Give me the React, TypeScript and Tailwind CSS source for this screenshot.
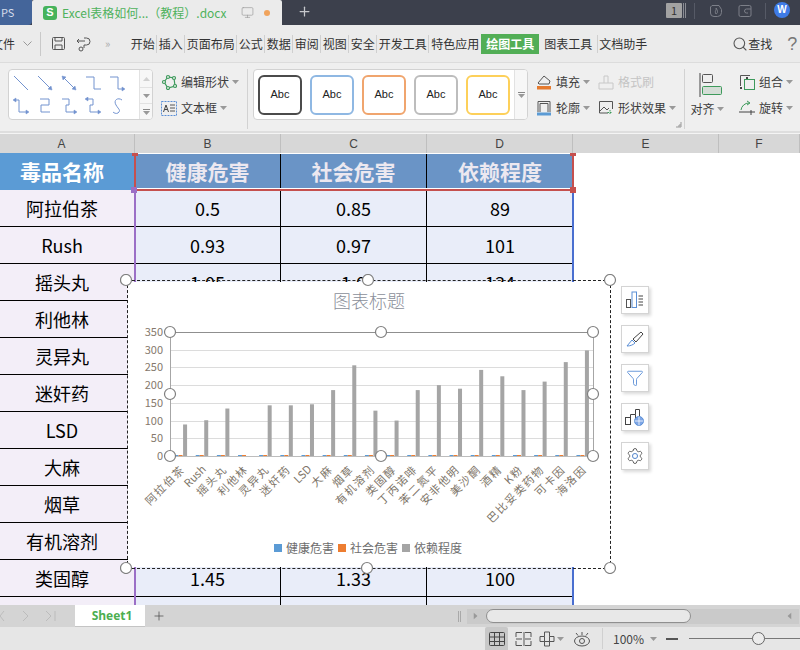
import React from 'react';
import { Monitor, Plus, Search, Settings, Funnel } from 'lucide-react';

const menuItems = [
  { label: '开始', w: 'w-[28px]' },
  { label: '插入', w: 'w-[28px]' },
  { label: '页面布局', w: 'w-[52px]' },
  { label: '公式', w: 'w-[28px]' },
  { label: '数据', w: 'w-[28px]' },
  { label: '审阅', w: 'w-[28px]' },
  { label: '视图', w: 'w-[28px]' },
  { label: '安全', w: 'w-[28px]' },
  { label: '开发工具', w: 'w-[52px]' },
  { label: '特色应用', w: 'w-[52px]' },
];

const rows = [
  ['阿拉伯茶', '0.5', '0.85', '89'],
  ['Rush', '0.93', '0.97', '101'],
  ['摇头丸', '1.05', '1.0', '134'],
  ['利他林', '', '', ''],
  ['灵异丸', '', '', '143'],
  ['迷奸药', '', '', '143'],
  ['LSD', '', '', '146'],
  ['大麻', '', '', '186'],
  ['烟草', '', '', '256'],
  ['有机溶剂', '', '', '128'],
  ['类固醇', '1.45', '1.33', '100'],
  ['', '', '', ''],
];

const categories = [
  ['阿拉伯茶', 89], ['Rush', 101], ['摇头丸', 134], ['利他林', 0], ['灵异丸', 143],
  ['迷奸药', 143], ['LSD', 146], ['大麻', 186], ['烟草', 256], ['有机溶剂', 128],
  ['类固醇', 100], ['丁丙诺啡', 186], ['苯二氮平', 200], ['安非他明', 190], ['美沙酮', 243],
  ['酒精', 225], ['K粉', 186], ['巴比妥类药物', 210], ['可卡因', 265], ['海洛因', 298],
] as [string, number][];

const Caret = ({ className = '' }: { className?: string }) => (
  <svg width="7" height="4" viewBox="0 0 7 4" className={className}>
    <path d="M0 0h7L3.5 4z" fill="#999" />
  </svg>
);

const LineIcon = ({ d, arrow }: { d: string; arrow?: string }) => (
  <svg width="18" height="18" viewBox="0 0 18 18" fill="none" stroke="#7393cf" strokeWidth="1">
    <path d={d} />
    {arrow && <path d={arrow} fill="#7393cf" strokeWidth="0.5" />}
  </svg>
);

const lineIcons = [
  { d: 'M2 2l14 14' },
  { d: 'M2 2l13 13', arrow: 'M16 16l-4-1 3-3z' },
  { d: 'M3 3l12 12', arrow: 'M2 2l4 1-3 3zM16 16l-4-1 3-3z' },
  { d: 'M2 3h8v12h7' },
  { d: 'M2 3h8v12h6', arrow: 'M17 15l-3-2v4z' },
  { d: 'M4 3h3v12h8', arrow: 'M1 3l3-2v4zM17 15l-3-2v4z' },
  { d: 'M4 2h9v6H5v7h9' },
  { d: 'M2 2h7v6H6v7h8', arrow: 'M17 15l-3-2v4z' },
  { d: 'M4 2h5v6H6v7h8', arrow: 'M1 2l3-2v4zM17 15l-3-2v4z' },
  { d: 'M14 3c-4-3-9 0-6 5s5 5 2 8c-2 1-4 0-5-1' },
];

const abcBoxes = [
  'border-[#4b4b4b]',
  'border-[#8fb8e3]',
  'border-[#f0a56e]',
  'border-[#bdbdbd]',
  'border-[#fdd05a]',
];

const RibbonBtn = ({ icon, label, muted, caret = true }: { icon: React.ReactNode; label: string; muted?: boolean; caret?: boolean }) => (
  <div className="flex h-[26px] items-center whitespace-nowrap">
    <span className="flex w-[20px] shrink-0 items-center">{icon}</span>
    <span className={`text-[12px] leading-none ${muted ? 'text-[#c4c4c4]' : 'text-[#3c3c3c]'}`}>{label}</span>
    {caret && <Caret className="ml-[3px] shrink-0" />}
  </div>
);

const Divider = ({ className = '' }: { className?: string }) => <div className={`w-px bg-[#d2d2d2] ${className}`} />;

const Handle = ({ x, y }: { x: number; y: number }) => (
  <circle cx={x} cy={y} r="5.5" fill="#fff" stroke="#7f7f7f" strokeWidth="1.2" />
);

function ChartGraphic() {
  const baseY = 456;
  const slot = 423 / 20;
  return (
    <svg viewBox="120 274 500 300" className="absolute left-[-8px] top-[-7px] h-[300px] w-[500px]" fontFamily="'Noto Sans CJK SC', sans-serif">
      <text x="369" y="308" textAnchor="middle" fontSize="18" fontWeight="300" fill="#8a8f9a">图表标题</text>
      {[300, 250, 200, 150, 100, 50].map((v) => {
        const y = Math.round(baseY - (v * 124) / 350) + 0.5;
        return <line key={v} x1="170" x2="593" y1={y} y2={y} stroke="#dcdcdc" strokeWidth="1" />;
      })}
      {[350, 300, 250, 200, 150, 100, 50, 0].map((v) => (
        <text key={v} x="163" y={baseY - (v * 124) / 350 + 4} textAnchor="end" fontSize="11" fill="#85786c">{v}</text>
      ))}
      <path d="M170.500 332V456M593.500 332V456" stroke="#a6a6a6" strokeWidth="1" fill="none" />
      <line x1="170" x2="593" y1="332.500" y2="332.500" stroke="#8f8f8f" strokeWidth="1" />
      <line x1="170" x2="593" y1="456.500" y2="456.500" stroke="#bdbdbd" strokeWidth="1" />
      {categories.map(([name, value], i) => {
        const cx = 170 + slot * (i + 0.5);
        const h = (value * 124) / 350;
        const ax = cx + 5;
        return (
          <g key={name}>
            <rect x={cx - 6} y={baseY - 1} width="4" height="1" fill="#5b9bd5" />
            <rect x={cx - 2} y={baseY - 1} width="4" height="1" fill="#ed7d31" />
            <rect x={cx + 2.5} y={baseY - h} width="4" height={h} fill="#a5a5a5" />
            <text
              x={ax}
              y={470}
              textAnchor="end"
              fontSize="11"
              letterSpacing={/^[A-Za-z]+$/.test(name) ? 0 : 1.6}
              fill="#7d7468"
              transform={`rotate(-45 ${ax} 470)`}
            >
              {name}
            </text>
          </g>
        );
      })}
      <rect x="274" y="544" width="8" height="8" fill="#5b9bd5" />
      <text x="286" y="552.500" fontSize="12" fill="#6e6e6e">健康危害</text>
      <rect x="338" y="544" width="8" height="8" fill="#ed7d31" />
      <text x="350" y="552.500" fontSize="12" fill="#6e6e6e">社会危害</text>
      <rect x="402" y="544" width="8" height="8" fill="#a5a5a5" />
      <text x="414" y="552.500" fontSize="12" fill="#6e6e6e">依赖程度</text>
      {[[170, 332], [381, 332], [593, 332], [170, 394], [593, 394], [170, 456], [381, 456], [593, 456]].map(([x, y]) => (
        <Handle key={`${x}-${y}`} x={x} y={y} />
      ))}
      {[[126, 280], [368, 280], [610, 280], [126, 568], [367, 568], [610, 568]].map(([x, y]) => (
        <Handle key={`o${x}-${y}`} x={x} y={y} />
      ))}
    </svg>
  );
}

const SideBtn = ({ children }: { children: React.ReactNode }) => (
  <div className="flex h-[28px] w-[28px] items-center justify-center border border-[#d4d4d4] bg-white shadow-[2px_2px_3px_rgba(0,0,0,0.15)]">
    {children}
  </div>
);

export default function App() {
  return (
    <div className="flex h-[650px] w-[800px] flex-col overflow-hidden bg-white font-['Noto_Sans_CJK_SC',sans-serif] text-black">
      {/* title bar */}
      <div className="flex h-[25px] shrink-0 items-stretch bg-[#3c404c]">
        <div className="flex w-[32px] shrink-0 items-center rounded-br-[4px] bg-[#44659a] pl-[1px] text-[11px] text-[#d5dcea]">PS</div>
        <div className="flex w-[250px] shrink-0 items-center rounded-t-[2px] bg-[#ebebeb] pl-[11px]">
          <div className="flex h-[14px] w-[14px] shrink-0 items-center justify-center rounded-[3px] bg-[#46b35b]">
            <span className="font-['Liberation_Sans',sans-serif] text-[11px] font-bold leading-none text-white">S</span>
          </div>
          <span className="ml-[5px] w-[168px] shrink-0 whitespace-nowrap text-[12px] leading-none text-[#4fb25c]">Excel表格如何...（教程）.docx</span>
          <Monitor className="ml-[11px] h-[13px] w-[13px] shrink-0 text-[#999]" strokeWidth={1.2} />
          <span className="ml-[10px] h-[6px] w-[6px] shrink-0 rounded-full bg-[#f0a35c]" />
        </div>
        <Plus className="ml-[15px] mt-[4px] h-[15px] w-[15px] shrink-0 text-[#c6c8cc]" strokeWidth={2} />
        <div className="ml-[354px] mt-[3px] flex h-[15px] w-[16px] shrink-0 items-center justify-center rounded-[1px] bg-[#a2a2a2] text-[11px] leading-none text-[#333]">1</div>
        <div className="ml-[1px] mt-[3px] h-[15px] w-[3px] shrink-0 border-x border-[#8b8d94]" />
        <div className="ml-[8px] mt-[3px] h-[16px] w-px shrink-0 bg-[#565a66]" />
        <svg width="14" height="14" viewBox="0 0 14 14" fill="none" stroke="#7c7f88" className="ml-[14px] mt-[4px] shrink-0">
          <path d="M3 1.500h7l2.500 4v3a4 4 0 0 1-4 4H5a3.500 3.500 0 0 1-3.500-3.500V3z" />
          <path d="M7 4c1 2-2 3 0 6 2-1 2-3 0-6z" />
        </svg>
        <svg width="14" height="14" viewBox="0 0 14 14" fill="none" stroke="#7c7f88" className="ml-[15px] mt-[4px] shrink-0">
          <rect x="1" y="1.500" width="12" height="11" rx="1.500" />
          <path d="M13 5H8.500a2 2 0 0 0 0 4H10" />
        </svg>
        <div className="ml-[13px] mt-[3px] h-[16px] w-px shrink-0 bg-[#565a66]" />
        <div className="ml-[8px] mt-[2px] flex h-[16px] w-[16px] shrink-0 items-center justify-center rounded-full bg-[#3f7be6] font-['Liberation_Sans',sans-serif] text-[10px] font-bold leading-none text-white">W</div>
      </div>

      {/* menu bar */}
      <div className="flex h-[38px] shrink-0 items-center border-b border-[#dcdcdc] bg-[#ebebeb]">
        <span className="ml-[-9px] w-[25px] whitespace-nowrap text-[12px] leading-none text-[#333]">文件</span>
        <svg width="9" height="6" viewBox="0 0 9 6" fill="none" stroke="#999" className="ml-[7px]"><path d="M.5.500l4 4 4-4" /></svg>
        <div className="ml-[8px] h-[24px] w-px bg-[#c9c9c9]" />
        <svg width="15" height="15" viewBox="0 0 15 15" fill="none" stroke="#555" className="ml-[10px]">
          <path d="M1.500 2.500a1 1 0 0 1 1-1h10a1 1 0 0 1 1 1v10a1 1 0 0 1-1 1h-10a1 1 0 0 1-1-1z" />
          <path d="M4 1.500V5h7V1.500M4 13.500V9h7v4.500" />
        </svg>
        <svg width="16" height="16" viewBox="0 0 16 16" fill="none" stroke="#555" className="ml-[10px]">
          <path d="M1 5h8M3 3L1 5l2 2M8 2h2.500a3.500 3.500 0 0 1 0 7H8v3" />
          <circle cx="5" cy="13" r="2" />
        </svg>
        <span className="ml-[13px] text-[11px] leading-none tracking-[-1px] text-[#aaa]">»</span>
        <div className="ml-[20px] flex items-center">
          {menuItems.map((m, i) => (
            <div key={m.label} className={`flex h-[18px] items-center justify-center whitespace-nowrap text-[12px] leading-none text-[#333] ${m.w} ${i < menuItems.length - 1 ? 'border-r border-[#cfcfcf]' : ''}`}>
              {m.label}
            </div>
          ))}
        </div>
        <div className="flex h-[20px] w-[58px] items-center justify-center bg-[#52ae56] text-[12px] font-bold leading-none text-white">绘图工具</div>
        <div className="flex h-[18px] w-[59px] items-center justify-center border-r border-[#cfcfcf] text-[12px] leading-none text-[#333]">图表工具</div>
        <div className="ml-[1px] whitespace-nowrap text-[12px] leading-none text-[#333]">文档助手</div>
        <Search className="ml-[85px] h-[16px] w-[16px] text-[#555]" strokeWidth={1.6} />
        <span className="whitespace-nowrap text-[12px] leading-none text-[#333]">查找</span>
        <span className="ml-[15px] font-['Liberation_Sans',sans-serif] text-[18px] font-light leading-none text-[#777]">?</span>
      </div>

      {/* ribbon */}
      <div className="flex h-[70px] shrink-0 items-start border-b-[2px] border-[#dedede] bg-[#efefef] pt-[6px]">
        <div className="ml-[8px] flex h-[51px] w-[145px] shrink-0 overflow-hidden rounded-[4px] border border-[#d2d2d2] bg-white">
          <div className="grid w-[120px] grid-cols-5 content-center gap-y-[5px]">
            {lineIcons.map((icon, i) => (
              <div key={i} className="flex justify-center"><LineIcon d={icon.d} arrow={icon.arrow} /></div>
            ))}
          </div>
          <div className="ml-auto flex w-[13px] flex-col border-l border-[#e2e2e2] bg-[#f7f7f7]">
            <div className="flex h-[17px] items-center justify-center"><Caret className="rotate-180 opacity-40" /></div>
            <div className="flex h-[17px] items-center justify-center border-y border-[#e2e2e2]"><Caret /></div>
            <div className="flex flex-1 flex-col items-center justify-center gap-[1px]"><div className="h-px w-[7px] bg-[#888]" /><Caret /></div>
          </div>
        </div>

        <div className="ml-[8px] w-[78px] shrink-0">
          <RibbonBtn
            label="编辑形状"
            icon={
              <svg width="16" height="16" viewBox="0 0 16 16" fill="none" stroke="#3d9a5b" strokeWidth="1.2">
                <path d="M3 8l4-5 6 1 1 8-7 2z" />
                <circle cx="3" cy="8" r="1.500" fill="#efefef" /><circle cx="7" cy="3" r="1.500" fill="#efefef" /><circle cx="13" cy="4" r="1.500" fill="#efefef" /><circle cx="14" cy="12" r="1.500" fill="#efefef" /><circle cx="7" cy="14" r="1.500" fill="#efefef" />
              </svg>
            }
          />
          <RibbonBtn
            label="文本框"
            icon={
              <svg width="16" height="15" viewBox="0 0 16 15" fill="none">
                <rect x=".5" y=".5" width="15" height="14" stroke="#5b8fd6" strokeDasharray="2 1" />
                <path d="M2.500 11l2.500-7 2.500 7M3.500 8.500h3" stroke="#444" />
                <path d="M9 4h5M9 7h5M9 10h5" stroke="#555" />
              </svg>
            }
          />
        </div>

        <Divider className="ml-[8px] h-[60px] shrink-0" />

        <div className="ml-[5px] flex h-[51px] w-[275px] shrink-0 overflow-hidden rounded-[4px] border border-[#d2d2d2] bg-white">
          <div className="flex flex-1 items-center gap-[8px] pl-[4px]">
            {abcBoxes.map((c) => (
              <div key={c} className={`flex h-[40px] w-[44px] items-center justify-center rounded-[6px] border-[2px] bg-white ${c}`}>
                <span className="font-['Liberation_Sans',sans-serif] text-[11px] leading-none text-[#222]">Abc</span>
              </div>
            ))}
          </div>
          <div className="flex w-[13px] flex-col items-center justify-center gap-[1px] border-l border-[#e2e2e2] bg-[#f7f7f7]">
            <div className="h-px w-[7px] bg-[#888]" />
            <Caret />
          </div>
        </div>

        <div className="ml-[8px] w-[62px] shrink-0">
          <RibbonBtn
            label="填充"
            icon={
              <svg width="16" height="17" viewBox="0 0 16 17" fill="none">
                <path d="M2 9l6-7 6 5-1 3H3z" stroke="#555" />
                <rect x="1" y="12" width="14" height="3.500" fill="#e57a2e" />
              </svg>
            }
          />
          <RibbonBtn
            label="轮廓"
            icon={
              <svg width="16" height="17" viewBox="0 0 16 17" fill="none">
                <path d="M2 12V1.500h12V12M4 12V3.500h8V12" stroke="#555" />
                <rect x="1" y="12.500" width="14" height="3" fill="#5b9bd5" />
              </svg>
            }
          />
        </div>

        <div className="w-[77px] shrink-0">
          <RibbonBtn
            label="格式刷"
            muted
            caret={false}
            icon={
              <svg width="16" height="16" viewBox="0 0 16 16" fill="none" stroke="#c8c8c8">
                <path d="M1 15V9h14v6zM6 9V2h4v7" />
              </svg>
            }
          />
          <RibbonBtn
            label="形状效果"
            icon={
              <svg width="16" height="16" viewBox="0 0 16 16" fill="none" stroke="#555">
                <path d="M10 13H1.500V1.500h13V9" />
                <path d="M2 11l4-4 3 3 2-2" />
                <path d="M12 10v5M9.500 12.500h5" stroke="#3d9a5b" strokeDasharray="1.500 1" />
              </svg>
            }
          />
        </div>

        <div className="flex h-[60px] w-[10px] shrink-0 flex-col justify-end">
          <svg width="7" height="7" viewBox="0 0 7 7" fill="none" stroke="#999" className="mb-[1px]"><path d="M6 1v5H1M6 4H4v2" /></svg>
        </div>

        <Divider className="ml-[-1px] h-[60px] shrink-0" />

        <div className="ml-[5px] flex w-[34px] shrink-0 flex-col items-center">
          <svg width="24" height="24" viewBox="0 0 24 24" fill="none" className="ml-[8px] mt-[4px]">
            <path d="M1 0v24" stroke="#444" />
            <rect x="3.500" y="1.500" width="10" height="8" rx="1" stroke="#555" />
            <rect x="3.500" y="13.500" width="19" height="8" rx="1" stroke="#3d9a5b" fill="#d4ddd6" />
          </svg>
          <div className="mt-[6px] flex items-center">
            <span className="whitespace-nowrap text-[12px] leading-none text-[#3c3c3c]">对齐</span>
            <Caret className="ml-[2px]" />
          </div>
        </div>

        <div className="ml-[15px] w-[56px] shrink-0">
          <RibbonBtn
            label="组合"
            icon={
              <svg width="17" height="17" viewBox="0 0 17 17" fill="none">
                <path d="M1.500 12V1.500H11" stroke="#555" />
                <rect x="5.500" y="5.500" width="10" height="10" stroke="#3d9a5b" />
                <rect x="1" y="13" width="2" height="2" fill="#444" />
                <rect x="7" y="3" width="2" height="2" fill="#444" />
              </svg>
            }
          />
          <RibbonBtn
            label="旋转"
            icon={
              <svg width="17" height="16" viewBox="0 0 17 16" fill="none">
                <path d="M2 10a8 8 0 0 1 8-7M8 1l3 2-3 2" stroke="#3d9a5b" />
                <path d="M0 12h16M12 10v5" stroke="#444" />
              </svg>
            }
          />
        </div>
      </div>

      {/* column headers, column A is scrolled a little past the left edge */}
      <div className="ml-[-11px] grid h-[20px] shrink-0 grid-cols-[146px_146px_146px_146px_146px_1fr] border-t border-[#f4f4f4] bg-[#d7d7d7] text-[12px] leading-none text-[#444]">
        {['A', 'B', 'C', 'D', 'E', 'F'].map((c) => (
          <div key={c} className="flex items-center justify-center border-r border-[#bfbfbf] font-['Liberation_Sans',sans-serif]">{c}</div>
        ))}
      </div>

      {/* sheet */}
      <div className="relative flex-1 overflow-hidden bg-white">
        <div className="ml-[-11px] grid w-[584px] grid-cols-[146px_146px_146px_146px]">
          <div className="flex h-[37px] items-center justify-center bg-[#5b9bd5] text-[21px] font-bold leading-none text-white">毒品名称</div>
          {['健康危害', '社会危害', '依赖程度'].map((h, i) => (
            <div key={h} className={`flex h-[37px] items-center justify-center bg-[#6a94c6] text-[21px] font-bold leading-none text-[#ece8f0] ${i < 2 ? 'border-r border-black' : ''}`}>{h}</div>
          ))}
          {rows.map((r, ri) => (
            <React.Fragment key={ri}>
              <div className="flex h-[37px] items-center justify-center border-b border-black bg-[#f3eef8] text-[18px] leading-none">{r[0]}</div>
              {r.slice(1).map((v, ci) => (
                <div key={ci} className={`flex h-[37px] items-center justify-center border-b border-black bg-[#e9edf9] text-[18px] leading-none ${ci < 2 ? 'border-r' : ''}`}>{v}</div>
              ))}
            </React.Fragment>
          ))}
        </div>

        {/* range selection marks */}
        <div className="pointer-events-none absolute left-[134px] top-0 h-[38px] w-[440px] border-x-[2px] border-b-[2px] border-t border-[#c5504e] border-t-white shadow-[inset_0_-1px_0_#fff]" />
        <div className="pointer-events-none absolute bottom-0 left-[134px] top-[38px] w-[2px] bg-[#9b6fc6]" />
        <div className="pointer-events-none absolute bottom-0 left-[572px] top-[40px] w-[2px] bg-[#4a6fd0]" />
        <div className="absolute left-[132px] top-0 h-[3px] w-[6px] bg-[#c5504e]" />
        <div className="absolute left-[570px] top-0 h-[3px] w-[6px] bg-[#c5504e]" />
        <div className="absolute left-[570px] top-[34px] h-[6px] w-[6px] bg-[#c5504e]" />
        <div className="absolute left-[131px] top-[34px] h-[6px] w-[6px] bg-[#9b6fc6]" />

        {/* chart selected over the table */}
        <div className="absolute left-[127px] top-[127px] h-[289px] w-[484px] border border-dashed border-[#222] py-[1px]">
          <div className="h-full w-full bg-white" />
          <ChartGraphic />
        </div>

        {/* chart side buttons */}
        <div className="absolute left-[621px] top-[133px] flex flex-col gap-[11px]">
          <SideBtn>
            <svg width="18" height="18" viewBox="0 0 18 18" fill="none">
              <rect x=".5" y="8.500" width="4" height="8" stroke="#555" />
              <rect x="6" y="1" width="4.500" height="15.500" stroke="#5b8fd6" />
              <path d="M12.500 5H17M12.500 8H17M12.500 11H17M12.500 14H17" stroke="#444" />
            </svg>
          </SideBtn>
          <SideBtn>
            <svg width="18" height="18" viewBox="0 0 18 18" fill="none" stroke="#5b8fd6">
              <path d="M1 16l5-6 3 3c-2 2-5 3-8 3z" />
              <path d="M7 9l8-7 2 2-7 8z" stroke="#444" />
            </svg>
          </SideBtn>
          <SideBtn><Funnel className="h-[18px] w-[18px] text-[#5b8fd6]" strokeWidth={1.2} /></SideBtn>
          <SideBtn>
            <svg width="20" height="18" viewBox="0 0 20 18" fill="none">
              <rect x=".5" y="9.500" width="5" height="7" stroke="#444" />
              <path d="M5.500 16.500V6.500h5V11M10.500 6.500V1.500h4v8" stroke="#444" />
              <circle cx="14" cy="13" r="4.500" fill="#7ea6e6" stroke="#5b8fd6" />
              <path d="M9.500 13h9M14 8.500v9" stroke="#fff" strokeWidth=".8" />
            </svg>
          </SideBtn>
          <SideBtn>
            <span className="relative flex items-center justify-center">
              <Settings className="h-[18px] w-[18px] text-[#444]" strokeWidth={1.1} />
              <span className="absolute h-[6px] w-[6px] rounded-full border border-[#5b8fd6] bg-white" />
            </span>
          </SideBtn>
        </div>
      </div>

      {/* sheet tabs */}
      <div className="flex h-[22px] shrink-0 items-center bg-[#d4d4d4]">
        <svg width="60" height="12" viewBox="0 0 60 12" fill="none" stroke="#bcbcbc" className="ml-[-1px] mr-[16px]">
          <path d="M5 1L1 6l4 5M24 1l5 5-5 5M47 1l5 5-5 5M56 1v10" />
        </svg>
        <div className="flex h-[22px] w-[70px] items-center justify-center border-b border-[#c4c4c4] bg-white pl-[4px] font-['Open_Sans',sans-serif] text-[12px] font-bold leading-none text-[#4cae50]">Sheet1</div>
        <Plus className="ml-[7px] h-[14px] w-[14px] text-[#444]" strokeWidth={1.2} />
        <div className="ml-[292px] h-[11px] w-[3px] border-x border-[#a9a9a9]" />
        <div className="ml-[6px] flex h-[15px] w-[332px] items-center bg-[#cacaca]">
          <Caret className="ml-[5px] -rotate-90" />
          <div className="ml-[7px] h-[14px] w-[205px] rounded-full border border-[#8f8f8f] bg-[#e8e8e8]" />
          <Caret className="ml-[95px] rotate-90" />
        </div>
      </div>

      {/* status bar */}
      <div className="flex h-[23px] shrink-0 items-center bg-[#e6e6e6]">
        <div className="ml-[485px] flex h-[23px] w-[23px] items-center justify-center rounded-t-[2px] bg-[#c8c8c8]">
          <svg width="16" height="14" viewBox="0 0 16 14" fill="none" stroke="#444">
            <rect x=".5" y=".5" width="15" height="13" rx="1" />
            <path d="M.5 5h15M.5 9.500h15M5.500.5v13M10.500.5v13" />
          </svg>
        </div>
        <svg width="17" height="16" viewBox="0 0 17 16" fill="none" stroke="#555" className="ml-[7px]">
          <path d="M1 6V1.500h6M10 1.500h6V6M1 10v4.500h6M10 14.500h6V10M1 8h6M10 8h6M9 1v14" />
        </svg>
        <svg width="16" height="16" viewBox="0 0 16 16" fill="none" stroke="#555" className="ml-[7px]">
          <path d="M5.500 1h5v4.500H15v5h-4.500V15h-5v-4.500H1v-5h4.500zM5.500 5.500v5h5v-5" />
        </svg>
        <Caret className="ml-[2px]" />
        <svg width="18" height="16" viewBox="0 0 18 16" fill="none" stroke="#555" className="ml-[9px]">
          <ellipse cx="9" cy="10" rx="7.500" ry="5" />
          <circle cx="9" cy="10" r="2.500" />
          <path d="M9 1v3M3 2l2 2.500M15 2l-2 2.500" />
        </svg>
        <div className="ml-[11px] h-[21px] w-px bg-[#d0d0d0]" />
        <span className="ml-[10px] w-[33px] whitespace-nowrap text-[12px] leading-none text-[#444]">100%</span>
        <Caret className="ml-[4px]" />
        <div className="ml-[9px] h-[2px] w-[12px] bg-[#555]" />
        <div className="relative ml-[11px] h-px flex-1 bg-[#777]">
          <div className="absolute left-[63px] top-[-6px] h-[13px] w-[13px] rounded-full border border-[#666] bg-[#ececec]" />
        </div>
      </div>
    </div>
  );
}
